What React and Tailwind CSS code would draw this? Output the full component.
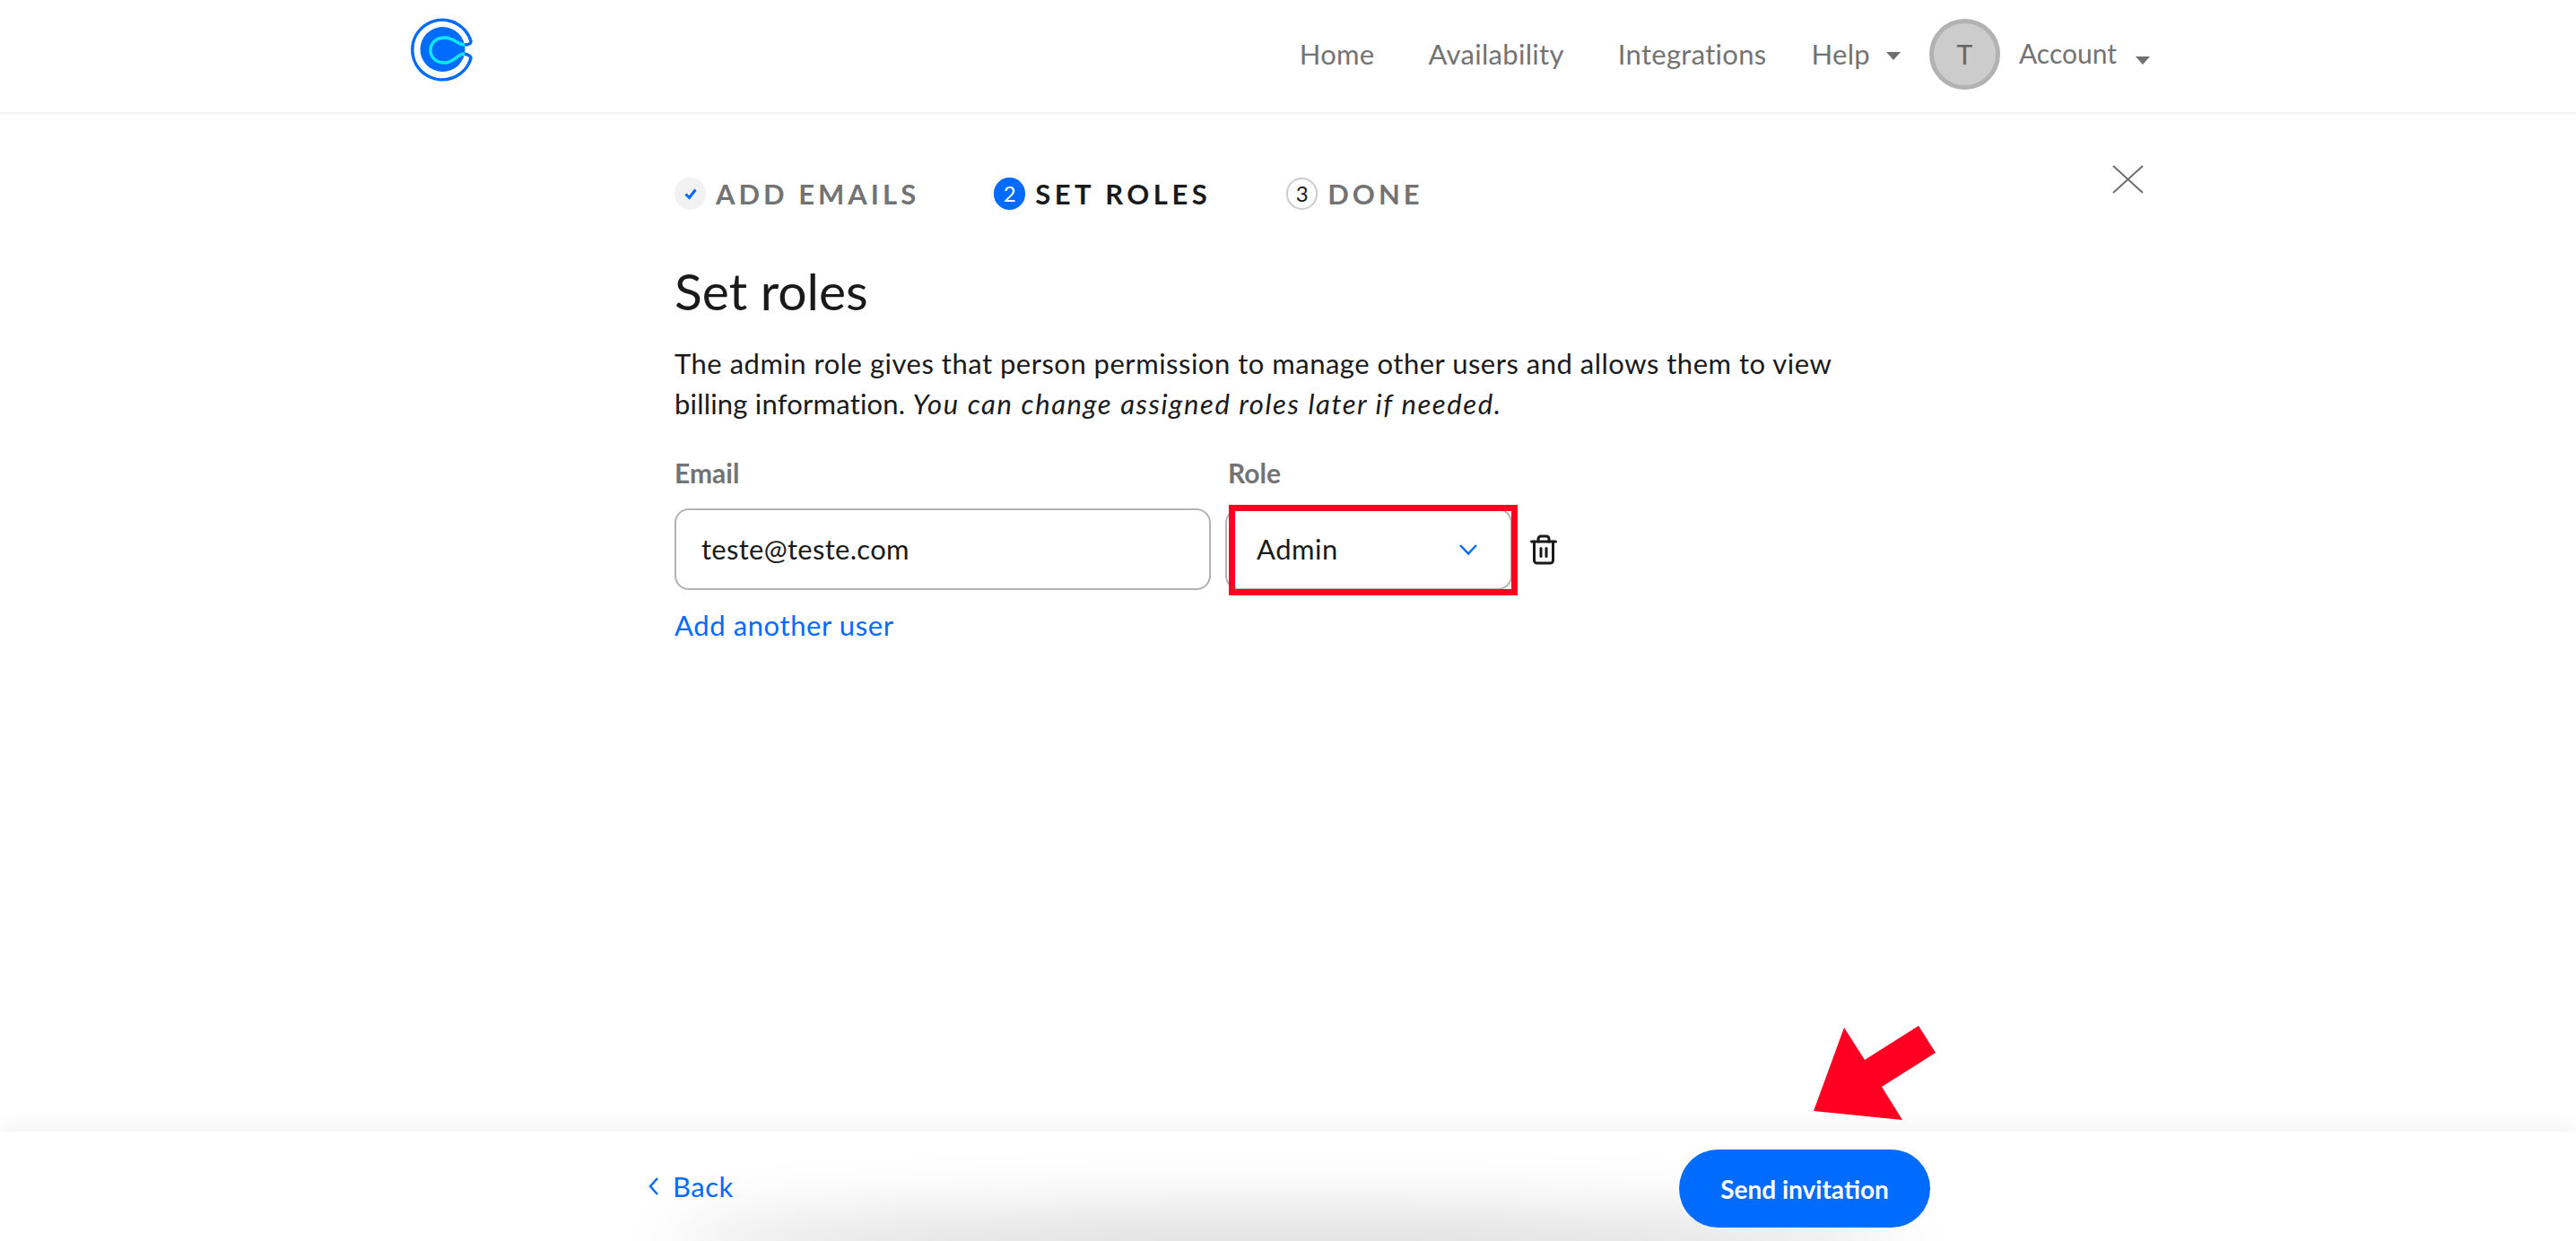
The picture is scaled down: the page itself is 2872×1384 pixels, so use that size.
import React from 'react';
import { Trash2 } from 'lucide-react';

const Caret = ({ className }) => (
  <svg viewBox="0 0 16 9" className={className}><path d="M0 0h16L8 9z" fill="#6f6f6f" /></svg>
);

const Logo = () => (
  <svg viewBox="0 0 72 72" className="w-[72px] h-[72px]" fill="none">
    <circle cx="35.5" cy="35" r="25" fill="#006bff" />
    <path d="M60 30C64 30 67 28.5 67 26A33.3 33.3 0 1 0 67 45C67 42.5 64 41 60 40" stroke="#006bff" strokeWidth="3.5" />
    <path d="M60 30C52 30 48 22 38 22C28 22 22 28 22 36C22 44 28 50 38 50C48 50 52 40 60 40" stroke="#0ae8f0" strokeWidth="3.5" />
  </svg>
);

const NavLink = ({ children, className = '' }) => (
  <span className={`text-[31px] leading-none tracking-[0.3px] text-[#737373] ${className}`}>{children}</span>
);

const Step = ({ icon, label, active, className = '' }) => (
  <div className={`flex items-center gap-[11px] ${className}`}>
    {icon}
    <span className={`text-[31px] leading-none font-bold ${active ? 'tracking-[4.5px] text-[#1a1a1a]' : 'tracking-[4px] text-[#737373]'}`}>{label}</span>
  </div>
);

export default function App() {
  return (
    <div className="relative h-screen overflow-hidden bg-white flex flex-col font-['Lato','Open_Sans',sans-serif] text-[#1a1a1a]">
      {/* Top nav */}
      <header className="h-[127px] shrink-0 border-b-2 border-[#f2f2f2] flex items-center pl-[458px] pr-[475px]">
        <div className="mb-[14px]"><Logo /></div>
        <nav className="ml-auto -mt-[5px] flex items-center">
          <NavLink>Home</NavLink>
          <NavLink className="ml-[60px]">Availability</NavLink>
          <NavLink className="ml-[60px]">Integrations</NavLink>
          <NavLink className="ml-[50px]">Help</NavLink>
          <Caret className="w-[16px] h-[9px] ml-[18px] mt-[4px]" />
          <div className="ml-[32px] w-[79px] h-[79px] rounded-full bg-[#cccccc] border-[5px] border-[#b2b2b2] flex items-center justify-center text-[30px] text-[#666666]">T</div>
          <span className="ml-[21px] -mt-[2px] text-[30px] leading-none text-[#737373]">Account</span>
          <Caret className="w-[16px] h-[9px] ml-[21px] mt-[14px]" />
        </nav>
      </header>

      {/* Wizard body */}
      <main className="relative flex-1 pl-[752px] pt-[71px]">
        <div className="flex items-center h-[36px]">
          <Step
            label="ADD EMAILS"
            icon={
              <span className="w-[35px] h-[36px] rounded-full bg-[#f2f2f2] flex items-center justify-center">
                <svg viewBox="0 0 18 18" className="w-[18px] h-[18px]" fill="none"><path d="M3.5 9.5L7.5 13.5L14.5 4.5" stroke="#006bff" strokeWidth="3" /></svg>
              </span>
            }
          />
          <Step
            active
            className="ml-[83px]"
            label="SET ROLES"
            icon={<span className="w-[35px] h-[36px] rounded-full bg-[#006bff] text-white text-[24px] flex items-center justify-center">2</span>}
          />
          <Step
            className="ml-[84px]"
            label="DONE"
            icon={<span className="w-[35px] h-[36px] rounded-full border-2 border-[#cccccc] text-[#1a1a1a] text-[24px] flex items-center justify-center">3</span>}
          />
        </div>

        <h1 className="mt-[58px] text-[57px] leading-[64px] font-normal">Set roles</h1>
        <p className="mt-[27px] text-[31px] leading-[45px] tracking-[0.5px]">
          The admin role gives that person permission to manage other users and allows them to view<br />
          <span className="tracking-[0.2px]">billing information. </span><em className="tracking-[1.6px]">You can change assigned roles later if needed.</em>
        </p>

        <div className="mt-[36px] flex text-[30px] leading-[36px] font-bold text-[#737373]">
          <label className="w-[617px]">Email</label>
          <label>Role</label>
        </div>

        <div className="mt-[22px] flex items-center">
          <div className="w-[598px] h-[91px] border-2 border-[#b2b2b2] rounded-[16px] flex items-center px-[28px] text-[31px] tracking-[0.3px]">teste@teste.com</div>
          <div className="relative ml-[16px] w-[320px] h-[91px] border-2 border-[#b2b2b2] rounded-[16px] flex items-center justify-between pl-[33px] pr-[37px] text-[31px] tracking-[0.5px]">
            Admin
            <svg viewBox="0 0 20 12" className="w-[20px] h-[12px]" fill="none"><path d="M1 1L10 10.5L19 1" stroke="#006bff" strokeWidth="2.5" /></svg>
            {/* highlight annotation */}
            <div className="absolute left-[2px] -top-[6px] w-[322px] h-[101px] border-[7px] border-[#ff0022]"></div>
          </div>
          <Trash2 className="ml-[17px] w-[36px] h-[36px] text-[#1a1a1a]" strokeWidth={2} />
        </div>

        <a className="block mt-[21px] text-[31px] leading-[36px] tracking-[0.6px] text-[#006bff]">Add another user</a>

        <button className="absolute left-[2355px] top-[57px] w-[35px] h-[32px]">
          <svg viewBox="0 0 35 32" className="w-[35px] h-[32px]" fill="none"><path d="M1 1L34 31M34 1L1 31" stroke="#6f6f6f" strokeWidth="2" /></svg>
        </button>
      </main>

      {/* Footer */}
      <footer className="relative z-10 h-[122px] shrink-0 bg-white shadow-[0_-6px_22px_rgba(0,0,0,0.05)] flex items-center pl-[723px] pr-[720px]">
        <svg viewBox="0 0 11 20" className="w-[11px] h-[20px]" fill="none"><path d="M10 1L2 10L10 19" stroke="#006bff" strokeWidth="2.5" /></svg>
        <a className="ml-[16px] text-[31px] leading-none tracking-[0.5px] text-[#006bff]">Back</a>
        <button className="relative z-10 ml-auto mt-[5px] w-[280px] h-[87px] rounded-full bg-[#006bff] text-white text-[28px] font-bold">Send invitation</button>
        <div className="absolute inset-x-[750px] -bottom-[40px] h-[70px] rounded-[50%] bg-[#000]/15 blur-[35px]"></div>
      </footer>

      {/* Annotation arrow */}
      <svg viewBox="0 0 2872 1384" className="absolute inset-0 z-20 w-[2872px] h-[1384px] pointer-events-none">
        <polygon points="2022,1239 2056,1146 2079,1182 2139,1144 2158,1174 2098,1212 2121,1249" fill="#ff0022" />
      </svg>
    </div>
  );
}
